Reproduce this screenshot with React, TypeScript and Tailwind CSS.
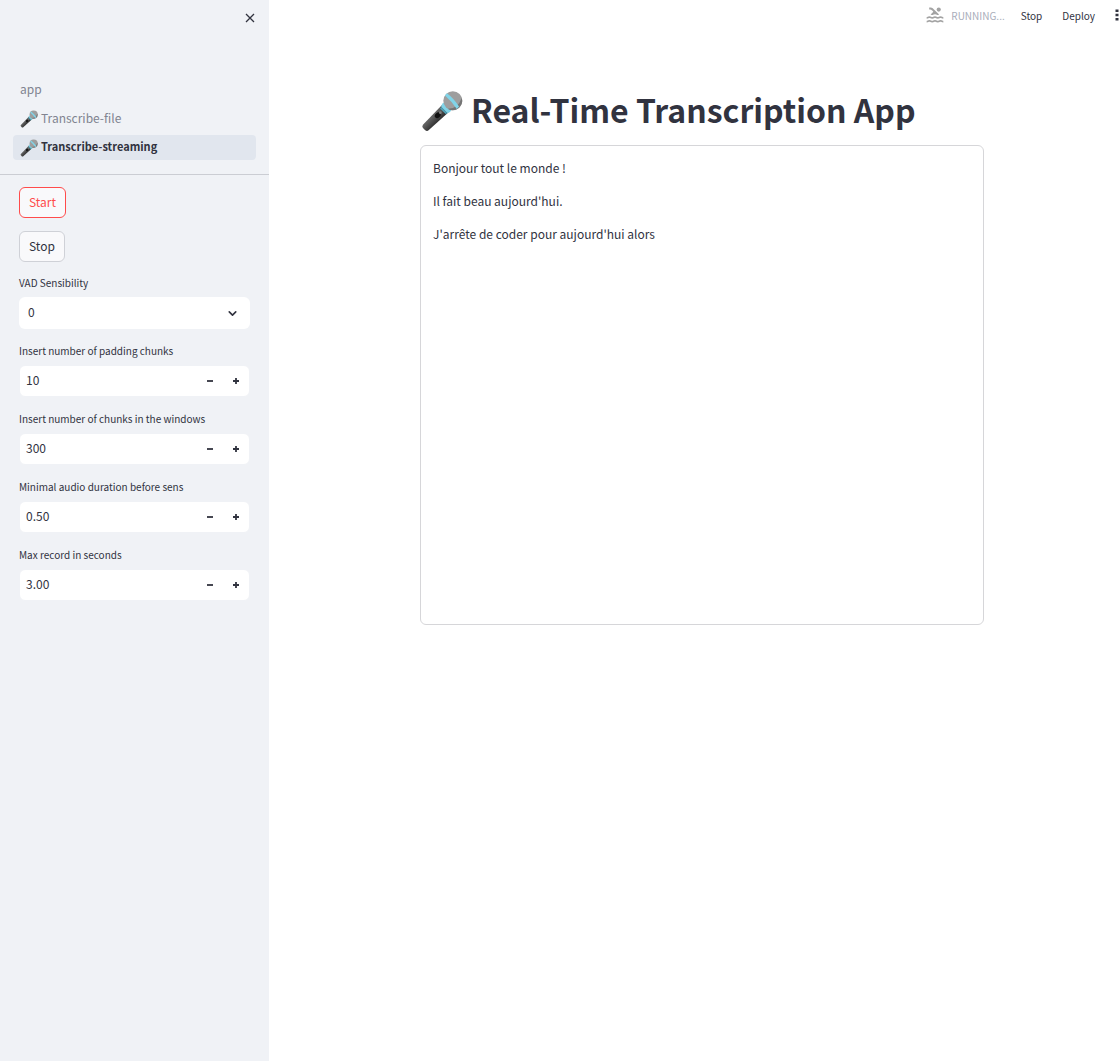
import { useId, useState } from "react";
import { ChevronDown } from "lucide-react";
import { MdPool } from "react-icons/md";

function Microphone({ className }: { className: string }) {
  const id = useId();
  return (
    <svg viewBox="0 0 128 128" className={className} aria-hidden="true">
      <defs>
        <linearGradient id={id} x1="20" y1="70" x2="50" y2="100" gradientUnits="userSpaceOnUse">
          <stop offset="0" stopColor="#4a4a4a" />
          <stop offset="0.45" stopColor="#616161" />
          <stop offset="1" stopColor="#2f2f2f" />
        </linearGradient>
      </defs>
      <path d="M64 46 L84 68 L23 123 Q18 127 12 122 L6 116 Q2 111 6 106 Z" fill={`url(#${id})`} />
      <path d="M71 37 L93 60 Q88 70 80 70 L62 52 Q61 43 71 37 Z" fill="#81d4e8" />
      <path d="M62 52 L80 70 L76 74 L58 56 Z" fill="#4fa3b8" />
      <circle cx="97" cy="33" r="29" fill="#9e9e9e" />
      <path d="M124 24 A29 29 0 0 1 81 57 Q112 58 124 24 Z" fill="#757575" />
      <path d="M73 17 L79 10 Q98 24 116 50 L109 58 Q94 35 73 17 Z" fill="#81d4e8" />
      <ellipse cx="51" cy="77" rx="10" ry="7.5" transform="rotate(-45 51 77)" fill="#111111" />
      <circle cx="59" cy="69" r="4" fill="#858585" />
    </svg>
  );
}

const pages = [
  { name: "app", icon: false, active: false },
  { name: "Transcribe-file", icon: true, active: false },
  { name: "Transcribe-streaming", icon: true, active: true },
];

const settings = [
  { id: "padding", label: "Insert number of padding chunks", value: 10, step: 1, digits: 0 },
  { id: "window", label: "Insert number of chunks in the windows", value: 300, step: 1, digits: 0 },
  { id: "minimal", label: "Minimal audio duration before sens", value: 0.5, step: 0.01, digits: 2 },
  { id: "maximal", label: "Max record in seconds", value: 3, step: 0.01, digits: 2 },
];

const transcript = [
  "Bonjour tout le monde !",
  "Il fait beau aujourd'hui.",
  "J'arrête de coder pour aujourd'hui alors",
];

function NumberField({ id, label, value, step, digits }: (typeof settings)[number]) {
  const [text, setText] = useState(value.toFixed(digits));
  const change = (by: number) => setText((Number(text) + by).toFixed(digits));
  return (
    <div className="flex flex-col gap-[5px]">
      <label htmlFor={id} className="text-[10px] leading-[18px]">
        {label}
      </label>
      <div className="flex h-8 rounded-md border border-[#f0f2f6] bg-white">
        <input
          id={id}
          type="text"
          inputMode="decimal"
          value={text}
          onChange={(e) => setText(e.target.value)}
          className="min-w-0 flex-1 rounded-md bg-transparent px-[6px] pb-0.5 text-xs outline-none"
        />
        <button
          type="button"
          aria-label={`Decrease ${label}`}
          onClick={() => change(-step)}
          className="flex w-[26px] items-center justify-center"
        >
          <svg viewBox="0 0 8 8" className="size-2" aria-hidden="true">
            <path d="M1 4H7" stroke="currentColor" strokeWidth="1.8" />
          </svg>
        </button>
        <button
          type="button"
          aria-label={`Increase ${label}`}
          onClick={() => change(step)}
          className="flex w-[26px] items-center justify-center"
        >
          <svg viewBox="0 0 8 8" className="size-2" aria-hidden="true">
            <path d="M1 4H7M4 1V7" stroke="currentColor" strokeWidth="1.8" />
          </svg>
        </button>
      </div>
    </div>
  );
}

export default function App() {
  return (
    <div className="flex min-h-screen bg-white font-['Noto_Sans_CJK_JP','Noto_Sans',sans-serif] text-[#31333f]">
      <aside className="w-[269px] shrink-0 bg-[#f0f2f6]">
        <div className="flex h-[77px] justify-end px-[13px] pt-[11px]">
          <button type="button" aria-label="Close sidebar" className="flex size-[13px] items-center justify-center">
            <svg viewBox="0 0 10 10" className="size-[10px]" aria-hidden="true">
              <path d="M1 1L9 9M9 1L1 9" stroke="currentColor" strokeWidth="1.3" />
            </svg>
          </button>
        </div>
        <nav className="flex flex-col gap-1 border-b border-[#cbcdd3] px-[13px] pb-[14px]">
          {pages.map((page) => (
            <a
              key={page.name}
              href="#"
              aria-current={page.active ? "page" : undefined}
              className={
                page.active
                  ? "flex h-[25px] items-center gap-[3px] rounded bg-[#e1e6ee] px-[7px] text-[11px] font-bold"
                  : "flex h-[25px] items-center gap-[3px] rounded px-[7px] text-xs text-[#808490]"
              }
            >
              {page.icon && <Microphone className="size-[18px]" />}
              <span className="pb-0.5">{page.name}</span>
            </a>
          ))}
        </nav>
        <div className="flex flex-col gap-3 px-[19px] pt-3">
          <div className="flex flex-col items-start gap-[13px]">
            <button
              type="button"
              className="h-[31px] rounded-md border border-[#ff4b4b] bg-[#f9f9fb] px-[9px] pb-0.5 text-xs text-[#ff4b4b]"
            >
              Start
            </button>
            <button
              type="button"
              className="h-[31px] rounded-md border border-[#cfd1d7] bg-[#f9f9fb] px-[9px] pb-0.5 text-xs"
            >
              Stop
            </button>
          </div>
          <div className="flex flex-col gap-[13px]">
            <div className="flex flex-col gap-[5px]">
              <label htmlFor="vad" className="text-[10px] leading-[18px]">
                VAD Sensibility
              </label>
              <div className="grid items-center">
                <select
                  id="vad"
                  defaultValue="0"
                  className="col-start-1 row-start-1 h-8 appearance-none rounded-md bg-white px-[9px] pb-0.5 text-xs outline-none"
                >
                  <option>0</option>
                  <option>1</option>
                  <option>2</option>
                  <option>3</option>
                </select>
                <ChevronDown
                  className="pointer-events-none col-start-1 row-start-1 mr-[11px] size-[13px] justify-self-end"
                  strokeWidth={3}
                  aria-hidden="true"
                />
              </div>
            </div>
            {settings.map((setting) => (
              <NumberField key={setting.id} {...setting} />
            ))}
          </div>
        </div>
      </aside>

      <div className="min-w-0 flex-1">
        <header className="flex h-[30px] items-center justify-end text-[10px]">
          <MdPool className="mr-[6px] size-5 text-[#a3a3a3]" aria-hidden="true" />
          <span className="mr-4 text-[#a9adba]">RUNNING...</span>
          <button type="button" className="mr-5">
            Stop
          </button>
          <button type="button" className="mr-5">
            Deploy
          </button>
          <button type="button" aria-label="Main menu">
            <svg viewBox="0 0 4 12" className="h-3 w-1" aria-hidden="true">
              <path d="M0.5 0.5h3v2.6h-3zM0.5 4.7h3v2.6h-3zM0.5 8.9h3v2.6h-3z" fill="currentColor" />
            </svg>
          </button>
        </header>
        <main className="mx-auto max-w-[580px] pt-[59px] pl-4">
          <h1 className="flex h-11 items-center gap-2 pl-px text-[32px] leading-[40px] font-bold">
            <Microphone className="size-[42px]" />
            <span className="pb-1">Real-Time Transcription App</span>
          </h1>
          <section className="mt-3 flex h-[480px] flex-col gap-[13px] rounded-md border border-[#d6d6d9] p-3 text-xs leading-5">
            {transcript.map((line) => (
              <p key={line}>{line}</p>
            ))}
          </section>
        </main>
      </div>
    </div>
  );
}
